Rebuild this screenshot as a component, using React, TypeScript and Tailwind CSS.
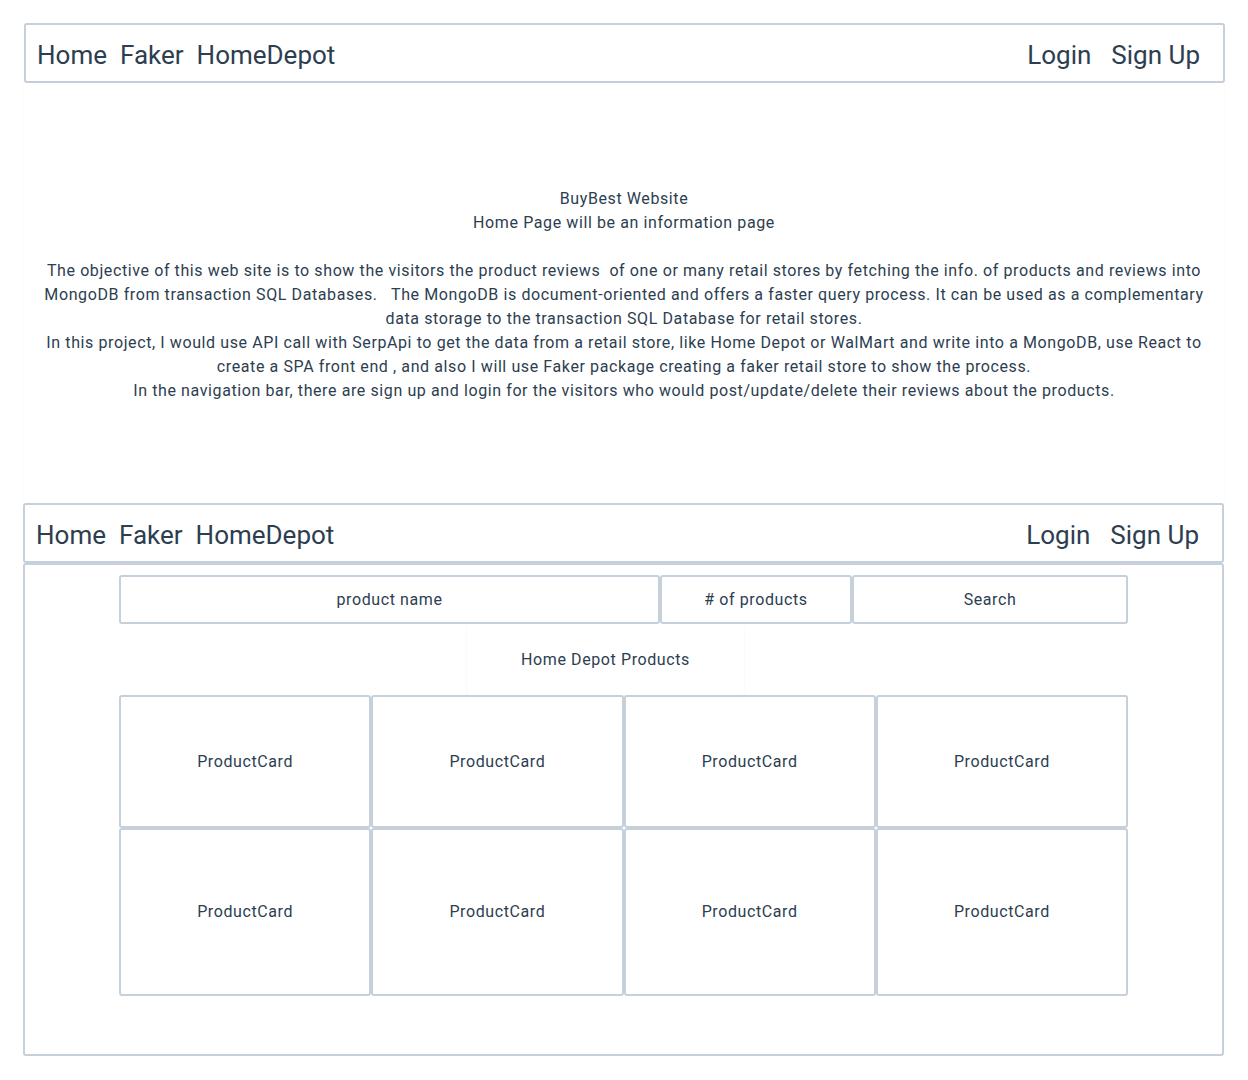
const navLeft = ['Home', 'Faker', 'HomeDepot']
const navRight = ['Login', 'Sign Up']

const infoLines = [
  'The objective of this web site is to show the visitors the product reviews  of one or many retail stores by fetching the info. of products and reviews into',
  'MongoDB from transaction SQL Databases.   The MongoDB is document-oriented and offers a faster query process. It can be used as a complementary',
  'data storage to the transaction SQL Database for retail stores.',
  'In this project, I would use API call with SerpApi to get the data from a retail store, like Home Depot or WalMart and write into a MongoDB, use React to',
  'create a SPA front end , and also I will use Faker package creating a faker retail store to show the process.',
  'In the navigation bar, there are sign up and login for the visitors who would post/update/delete their reviews about the products.',
]

function NavBar({ wide }: { wide?: boolean }) {
  return (
    <nav
      className={`flex h-[60px] items-center justify-between rounded-[3px] border-2 border-[#c6d0da] bg-white pl-[11px] pr-[23px] pt-[3px] text-[26px] leading-none ${
        wide ? 'mr-[-1px]' : ''
      }`}
    >
      <div className="flex items-center gap-[13px]">
        {navLeft.map((item) => (
          <a key={item} className="cursor-pointer">
            {item}
          </a>
        ))}
      </div>
      <div className="flex items-center gap-[20px]">
        {navRight.map((item) => (
          <a key={item} className="cursor-pointer">
            {item}
          </a>
        ))}
      </div>
    </nav>
  )
}

function ProductCard({ tall }: { tall?: boolean }) {
  return (
    <div
      className={`flex items-center justify-center rounded-[3px] border-2 border-[#c6d0da] ${
        tall ? 'h-[168px]' : 'h-[133px]'
      }`}
    >
      ProductCard
    </div>
  )
}

export default function App() {
  return (
    <div
      className="min-h-[1080px] bg-white pt-[23px] text-[#2c3e50]"
      style={{ fontFamily: 'Roboto, "Open Sans", sans-serif' }}
    >
      <div className="mx-[24px]">
        {/* Home page */}
        <NavBar wide />
        <section className="flex h-[420px] items-center justify-center bg-white pt-[4px] text-center text-[16px] leading-[24px] tracking-[0.6px] shadow-[0_0_3px_rgba(0,0,0,0.04)]">
          <div>
            <p>BuyBest Website</p>
            <p>Home Page will be an information page</p>
            <p>&nbsp;</p>
            {infoLines.map((line) => (
              <p key={line} className="whitespace-pre">
                {line}
              </p>
            ))}
          </div>
        </section>

        {/* Home Depot page */}
        <div className="-ml-px">
          <NavBar />
          <section className="h-[493px] rounded-[3px] border-2 border-[#c6d0da] pt-[10px] text-[16px] tracking-[0.6px]">
            <div className="mx-auto w-[1009px]">
              <div className="flex h-[49px]">
                <div className="flex w-[541px] items-center justify-center rounded-[3px] border-2 border-[#c6d0da]">
                  product name
                </div>
                <div className="flex w-[192px] items-center justify-center rounded-[3px] border-2 border-[#c6d0da]">
                  # of products
                </div>
                <div className="flex flex-1 items-center justify-center rounded-[3px] border-2 border-[#c6d0da]">
                  Search
                </div>
              </div>
              <div className="ml-[348px] flex h-[71px] w-[277px] items-center justify-center rounded-[3px] shadow-[0_1px_3px_rgba(0,0,0,0.05)]">
                Home Depot Products
              </div>
              <div className="grid grid-cols-4">
                {Array.from({ length: 4 }).map((_, i) => (
                  <ProductCard key={`a${i}`} />
                ))}
                {Array.from({ length: 4 }).map((_, i) => (
                  <ProductCard key={`b${i}`} tall />
                ))}
              </div>
            </div>
          </section>
        </div>
      </div>
    </div>
  )
}
